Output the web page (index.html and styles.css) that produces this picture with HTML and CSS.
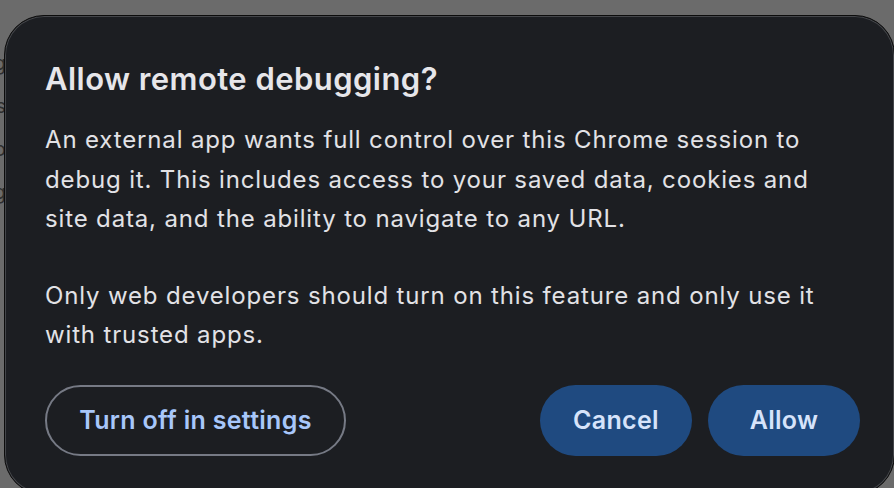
FILE: index.html
```html
<!DOCTYPE html>
<html lang="en">
<head>
<meta charset="utf-8">
<title>Allow remote debugging?</title>
<link rel="stylesheet" href="styles.css">
</head>
<body>
<div class="page">
  <p class="bg-line">debug</p>
  <p class="bg-line">this</p>
  <p class="bg-line">into</p>
  <p class="bg-line">debug</p>
</div>
<div class="dialog" role="dialog" aria-labelledby="dlg-title">
  <h1 id="dlg-title" class="title">Allow remote debugging?</h1>
  <p class="body-text">An external app wants full control over this Chrome session to debug it. This includes access to your saved data, cookies and site data, and the ability to navigate to any URL.</p>
  <p class="body-text">Only web developers should turn on this feature and only use it with trusted apps.</p>
  <div class="actions">
    <button class="btn btn-outline">Turn off in settings</button>
    <div class="actions-right">
      <button class="btn btn-filled">Cancel</button>
      <button class="btn btn-filled">Allow</button>
    </div>
  </div>
</div>
</body>
</html>
```
FILE: styles.css
```css
html, body {
  margin: 0;
  padding: 0;
  width: 894px;
  height: 488px;
  overflow: hidden;
  background: #6b6b6b;
  font-family: Inter, "Noto Sans", "Liberation Sans", sans-serif;
}

.page {
  padding-top: 48px;
  margin-left: -60px;
}

.bg-line {
  margin: 0;
  height: 43px;
  font-size: 20px;
  line-height: 30px;
  color: #2e2e2e;
  width: 66px;
  text-align: right;
}

.dialog {
  position: absolute;
  left: 4px;
  top: 15px;
  width: 891px;
  height: 480px;
  box-sizing: border-box;
  background: #1c1e22;
  border: 1px solid #0c0c0c;
  border-radius: 40px;
  box-shadow: inset 0 0 0 1px #44464a;
  padding: 43px 34px 0 40px;
}

.title {
  margin: 0;
  font-size: 31px;
  line-height: 40px;
  font-weight: 600;
  color: #e6e6ea;
  letter-spacing: 0.45px;
}

.body-text {
  margin: 21px 0 0 0;
  max-width: 775px;
  font-size: 24px;
  line-height: 39.5px;
  font-weight: 400;
  letter-spacing: 0.85px;
  color: #e2e2e6;
}

.body-text + .body-text {
  margin-top: 37px;
}

.actions {
  display: flex;
  justify-content: space-between;
  align-items: center;
  margin-top: 30px;
}

.actions-right {
  display: flex;
  gap: 16px;
}

.btn {
  font-family: inherit;
  font-size: 25px;
  font-weight: 600;
  letter-spacing: 0.3px;
  height: 71px;
  border-radius: 36px;
  padding: 0;
  cursor: pointer;
}

.btn-outline {
  width: 301px;
  background: transparent;
  border: 2px solid #767a85;
  color: #a8c7fa;
}

.btn-filled {
  width: 152px;
  background: #1f4a80;
  border: none;
  color: #d6e3fa;
}
```
